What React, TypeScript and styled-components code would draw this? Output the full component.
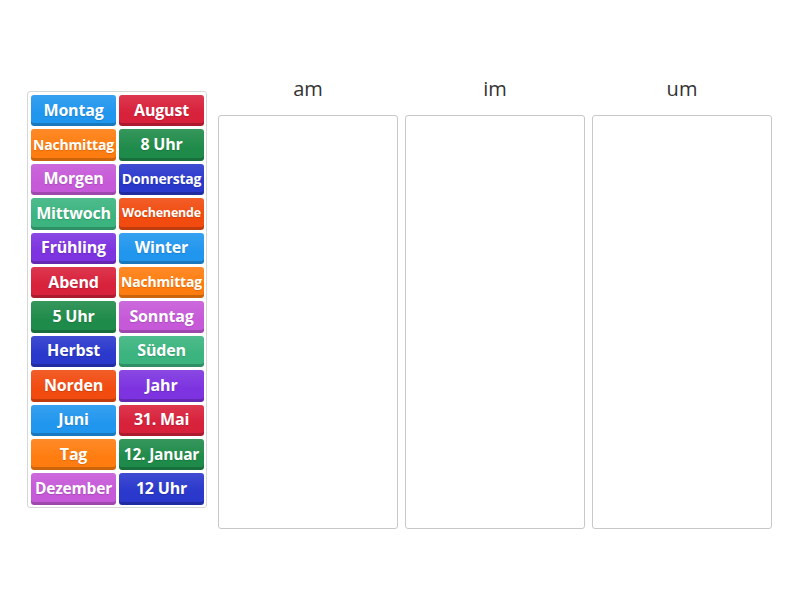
import React from "react";
import styled, { createGlobalStyle } from "styled-components";

const GlobalStyle = createGlobalStyle`
  body {
    margin: 0;
    background: #ffffff;
    font-family: "Open Sans", "Liberation Sans", sans-serif;
  }
`;

const palette: Record<string, string> = {
  blue: "#2196ee",
  red: "#d8213b",
  orange: "#ff7d10",
  green: "#1f8b4a",
  magenta: "#c659d8",
  navy: "#2a38cc",
  teal: "#3bb47f",
  flame: "#f14b10",
  violet: "#7d33e0",
};

interface ICard {
  label: string;
  color: string;
  size?: number;
}

const cards: ICard[] = [
  { label: "Montag", color: "blue" },
  { label: "August", color: "red" },
  { label: "Nachmittag", color: "orange", size: 14 },
  { label: "8 Uhr", color: "green" },
  { label: "Morgen", color: "magenta" },
  { label: "Donnerstag", color: "navy", size: 14 },
  { label: "Mittwoch", color: "teal" },
  { label: "Wochenende", color: "flame", size: 12.5 },
  { label: "Frühling", color: "violet" },
  { label: "Winter", color: "blue" },
  { label: "Abend", color: "red" },
  { label: "Nachmittag", color: "orange", size: 14 },
  { label: "5 Uhr", color: "green" },
  { label: "Sonntag", color: "magenta" },
  { label: "Herbst", color: "navy" },
  { label: "Süden", color: "teal" },
  { label: "Norden", color: "flame" },
  { label: "Jahr", color: "violet" },
  { label: "Juni", color: "blue" },
  { label: "31. Mai", color: "red" },
  { label: "Tag", color: "orange" },
  { label: "12. Januar", color: "green", size: 15.5 },
  { label: "Dezember", color: "magenta", size: 15.5 },
  { label: "12 Uhr", color: "navy" },
];

const groups = ["am", "im", "um"];

const App: React.FC = () => {
  return (
    <>
      <GlobalStyle />
      <Page>
        <Pool>
          {cards.map((c, i) => (
            <Card key={i} $bg={palette[c.color]} $size={c.size || 16}>
              {c.label}
            </Card>
          ))}
        </Pool>
        <Groups>
          {groups.map((g) => (
            <Group key={g}>
              <GroupTitle>{g}</GroupTitle>
              <DropBox />
            </Group>
          ))}
        </Groups>
      </Page>
    </>
  );
};

export default App;

const Page = styled.div`
  display: flex;
  align-items: flex-start;
  padding: 0 0 0 27px;
  width: 800px;
  height: 600px;
  box-sizing: border-box;
`;

const Pool = styled.div`
  margin-top: 91px;
  width: 180px;
  box-sizing: border-box;
  border: 1px solid #d6d6d6;
  border-radius: 3px;
  padding: 3px 3px 2px 3px;
  display: grid;
  grid-template-columns: 85px 85px;
  grid-auto-rows: 31.4px;
  column-gap: 3px;
  row-gap: 3px;
`;

const Card = styled.div<{ $bg: string; $size: number }>`
  display: flex;
  align-items: center;
  justify-content: center;
  padding-bottom: 2px;
  box-sizing: border-box;
  border-radius: 3px;
  background: linear-gradient(
      to bottom,
      rgba(255, 255, 255, 0.1),
      rgba(255, 255, 255, 0) 60%
    ),
    ${(p) => p.$bg};
  box-shadow: inset 0 -3px 0 rgba(0, 0, 0, 0.2);
  color: #ffffff;
  font-weight: 700;
  font-size: ${(p) => p.$size}px;
  white-space: nowrap;
  letter-spacing: -0.2px;
  text-shadow: 0 1px 1px rgba(0, 0, 0, 0.15);
`;

const Groups = styled.div`
  display: flex;
  gap: 7px;
  margin-left: 11px;
  margin-top: 71px;
`;

const Group = styled.div`
  display: flex;
  flex-direction: column;
  width: 180px;
`;

const GroupTitle = styled.div`
  height: 44px;
  display: flex;
  align-items: center;
  justify-content: center;
  font-size: 20px;
  color: #333333;
  padding-bottom: 10px;
  box-sizing: border-box;
`;

const DropBox = styled.div`
  height: 414px;
  border: 1px solid #c8c8c8;
  border-radius: 3px;
  box-sizing: border-box;
`;
